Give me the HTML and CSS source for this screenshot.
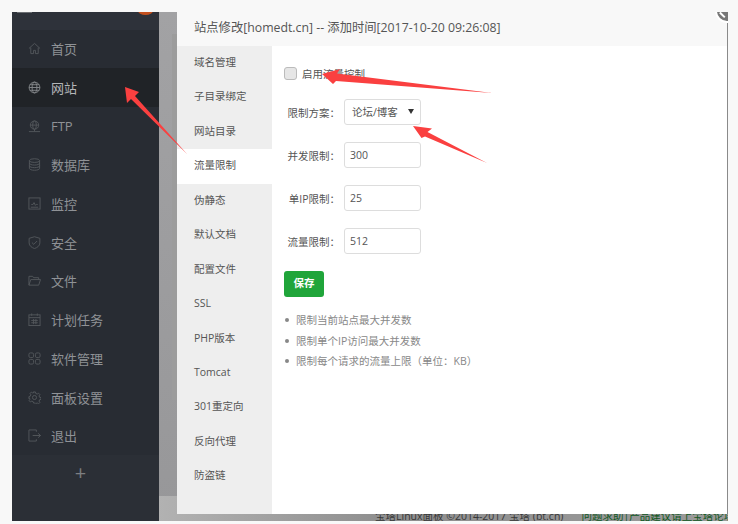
FILE: index.html
```html
<!DOCTYPE html>
<html lang="zh-CN">
<head>
<meta charset="utf-8">
<title>站点修改</title>
<link rel="stylesheet" href="styles.css">
</head>
<body>
<div class="app">
  <aside class="sidebar">
    <div class="logo"><span class="logo-mark"></span><span class="logo-badge"></span></div>
    <nav class="nav">
      <a class="nav-item"><svg class="ico" viewBox="0 0 14 14"><path d="M1 7 7 1.500 13 7M3 6v6.500h3V9h2v3.500h3V6"/></svg>首页</a>
      <a class="nav-item is-active"><svg class="ico" viewBox="0 0 14 14"><circle cx="7" cy="7" r="5.800"/><ellipse cx="7" cy="7" rx="2.600" ry="5.800"/><path d="M1.200 7h11.600M2 4h10M2 10h10"/></svg>网站</a>
      <a class="nav-item"><svg class="ico" viewBox="0 0 14 14"><circle cx="7" cy="5.500" r="4.500"/><ellipse cx="7" cy="5.500" rx="2" ry="4.500"/><path d="M2.500 5.500h9M7 10v2M1 12.500h12"/></svg>FTP</a>
      <a class="nav-item"><svg class="ico" viewBox="0 0 14 14"><ellipse cx="7" cy="2.800" rx="5.500" ry="2"/><path d="M1.500 2.800v8.400c0 1.100 2.500 2 5.500 2s5.500-.9 5.500-2V2.800M1.500 5.600c0 1.100 2.500 2 5.500 2s5.500-.9 5.500-2M1.500 8.400c0 1.100 2.500 2 5.500 2s5.500-.9 5.500-2"/></svg>数据库</a>
      <a class="nav-item"><svg class="ico" viewBox="0 0 14 14"><rect x="1" y="1" width="12" height="12"/><path d="M3.500 8h2l1-2 1.500 3 1-1h1.500M3 11h8"/></svg>监控</a>
      <a class="nav-item"><svg class="ico" viewBox="0 0 14 14"><path d="M7 .8 12.800 2.500v5c0 3-2.800 5-5.800 6-3-1-5.800-3-5.800-6v-5z"/><path d="m4.200 7 2 2 3.600-3.600"/></svg>安全</a>
      <a class="nav-item"><svg class="ico" viewBox="0 0 14 14"><path d="M1 12V2.500h4l1 1.500h5.500v2M1 12l2-6h10.500l-2 6z"/></svg>文件</a>
      <a class="nav-item"><svg class="ico" viewBox="0 0 14 14"><rect x="1" y="2" width="12" height="11.500"/><path d="M1 5h12M4 .5V3M10 .5V3M3.500 8h7M3.500 10.500h7M6 6.500v5.500M8.500 6.500v5.500"/></svg>计划任务</a>
      <a class="nav-item"><svg class="ico" viewBox="0 0 14 14"><rect x="1" y="1" width="5" height="5" rx="1.500"/><rect x="8" y="1" width="5" height="5" rx="1.500"/><rect x="1" y="8" width="5" height="5" rx="1.500"/><rect x="8" y="8" width="5" height="5" rx="1.500"/></svg>软件管理</a>
      <a class="nav-item"><svg class="ico" viewBox="0 0 14 14"><circle cx="7" cy="7" r="2.200"/><path d="M6 1h2l.4 1.700 1.500.6 1.500-.9 1.400 1.400-.9 1.500.6 1.500 1.500.2v2l-1.500.4-.6 1.500.9 1.500-1.400 1.400-1.500-.9-1.500.6L8 13H6l-.4-1.500-1.500-.6-1.500.9-1.400-1.400.9-1.500-.6-1.500L1 8V6l1.500-.4.600-1.500-.9-1.500 1.400-1.400 1.500.9 1.500-.6z"/></svg>面板设置</a>
      <a class="nav-item"><svg class="ico" viewBox="0 0 14 14"><path d="M9 3V1H1v12h8v-2M5 7h8.500M11 4.700 13.500 7 11 9.300"/></svg>退出</a>
    </nav>
    <div class="nav-add">+</div>
  </aside>
  <main class="backdrop">
    <div class="page-panel"></div>
    <footer class="page-foot"><span class="foot-copy">宝塔Linux面板 ©2014-2017 宝塔 (bt.cn)</span><a class="foot-link">问题求助|产品建议请上宝塔论坛</a></footer>
  </main>
  <section class="modal">
    <header class="modal-title">站点修改[homedt.cn] -- 添加时间[2017-10-20 09:26:08]</header>
    <div class="modal-body">
      <ul class="tabs">
        <li class="tab">域名管理</li>
        <li class="tab">子目录绑定</li>
        <li class="tab">网站目录</li>
        <li class="tab is-current">流量限制</li>
        <li class="tab">伪静态</li>
        <li class="tab">默认文档</li>
        <li class="tab">配置文件</li>
        <li class="tab">SSL</li>
        <li class="tab">PHP版本</li>
        <li class="tab">Tomcat</li>
        <li class="tab">301重定向</li>
        <li class="tab">反向代理</li>
        <li class="tab">防盗链</li>
      </ul>
      <form class="form">
        <label class="check-row"><span class="check"></span>启用流量控制</label>
        <div class="field"><span class="field-label">限制方案<span class="punct">：</span></span><div class="select">论坛/博客<span class="caret"></span></div></div>
        <div class="field"><span class="field-label">并发限制<span class="punct">：</span></span><div class="input">300</div></div>
        <div class="field"><span class="field-label">单IP限制<span class="punct">：</span></span><div class="input">25</div></div>
        <div class="field"><span class="field-label">流量限制<span class="punct">：</span></span><div class="input">512</div></div>
        <div class="save">保存</div>
        <ul class="notes">
          <li>限制当前站点最大并发数</li>
          <li>限制单个IP访问最大并发数</li>
          <li>限制每个请求的流量上限<span class="punct">（</span>单位<span class="punct">：</span>KB<span class="punct">）</span></li>
        </ul>
      </form>
    </div>
  </section>
  <div class="modal-close"></div>
</div>
<svg class="arrows" viewBox="0 0 738 524">
  <polygon points="125,87 139,92 135,96 187,154 131,99 127,103"/>
  <polygon points="322,74 340,69 337,73.500 492,93 336,81 333,84"/>
  <polygon points="413,126 432,128.500 427.500,132 487,163 425,136.500 421.500,138"/>
</svg>
</body>
</html>
```
FILE: styles.css
```css
* { box-sizing: border-box; }
html, body { margin: 0; height: 100%; }
body {
  background: #f8f8f8;
  padding: 12px 10px 3px 12px;
  font-family: "Open Sans", "Noto Sans CJK SC", sans-serif;
  font-size: 10.5px;
  color: #555;
  overflow: hidden;
  position: relative;
}
ul { list-style: none; margin: 0; padding: 0; }
.punct { font-family: "Noto Sans CJK TC", sans-serif; }
.app {
  position: relative;
  display: flex;
  width: 716px;
  height: 509px;
  overflow: hidden;
}
.sidebar {
  flex: 0 0 147px;
  background: #282c33;
  display: flex;
  flex-direction: column;
}
.logo { height: 17.5px; background: #2e323a; position: relative; }
.logo-mark {
  position: absolute; left: 5px; top: 0;
  width: 15px; height: 1px; background: #6b6e72;
}
.logo-badge {
  position: absolute; left: 126px; top: -6px;
  width: 15px; height: 9px; border-radius: 50%; background: #c4501e;
}
.nav-item {
  display: flex;
  align-items: center;
  height: 38.7px;
  padding-left: 16px;
  font-size: 13px;
  color: #8f9296;
}
.nav-item.is-active { background: #202327; color: #b4b6b8; }
.ico {
  width: 13px; height: 13px; margin-right: 10px;
  fill: none; stroke: #53575c; stroke-width: 1;
  flex: none;
}
.is-active .ico { stroke: #85888b; }
.nav-add {
  flex: 1;
  background: #2b2f36;
  color: #7d7f82;
  text-align: center;
  font-size: 20px;
  line-height: 35px;
  padding-right: 10px;
}
.backdrop {
  flex: 1;
  background: linear-gradient(180deg, #a2a2a4, #979799);
  display: flex;
  flex-direction: column;
  padding-left: 13px;
}
.page-panel { flex: 1; background: #9c9c9c; margin: 22px 0 96px; }
.page-foot {
  flex: none;
  height: 25px;
  background: linear-gradient(90deg, #b2b2b2, #8e8e8e 40%, #9b9b9b);
  margin-left: -13px;
  padding: 12px 0 0 216px;
  display: flex;
  gap: 18px;
  font-size: 10.5px;
  line-height: 16px;
  white-space: nowrap;
  color: #383838;
  overflow: hidden;
}
.foot-link { color: #10581f; }
.modal {
  position: absolute;
  left: 165px; top: 0;
  width: 551px; height: 502px;
  background: #fff;
  border-right: 1px solid #8a8a8a;
  display: flex;
  flex-direction: column;
}
.modal-title {
  flex: 0 0 34px;
  background: #f8f8f8;
  padding-left: 17px;
  font-size: 12.3px;
  line-height: 32px;
  color: #555;
}
.modal-body { flex: 1; display: flex; min-height: 0; }
.tabs { flex: 0 0 95px; background: #eee; }
.tab { height: 34.45px; line-height: 32px; padding-left: 17px; color: #555; }
.tab.is-current { background: #fff; }
.form { padding: 21px 0 0 12px; color: #555; }
.check-row { display: flex; align-items: center; height: 13px; gap: 5px; margin-bottom: 19px; }
.check {
  width: 13px; height: 13px; border: 1px solid #bbb; border-radius: 3px;
  background: #e6e6e6;
}
.field { display: flex; align-items: center; height: 26px; margin-bottom: 17px; }
.field-label { width: 60px; text-align: right; white-space: nowrap; padding-right: 4px; }
.input, .select {
  width: 77px; height: 26px;
  border: 1px solid #ddd; border-radius: 3px; padding-left: 5px;
  line-height: 24px; color: #555; background: #fff;
}
.select { padding-left: 7px; position: relative; }
.caret {
  position: absolute; right: 6px; top: 9px;
  border: 3px solid transparent; border-top: 5px solid #333; border-bottom: 0;
}
.save {
  width: 40px; height: 26px; margin-top: 1px;
  background: #20a53a; border-radius: 3px;
  color: #fff; text-align: center; line-height: 25px; font-weight: 700;
}
.notes { margin-top: 13px; color: #888; }
.notes li { position: relative; height: 20.5px; line-height: 20px; padding-left: 12px; white-space: nowrap; }
.notes li::before {
  content: ""; position: absolute; left: 1px; top: 8px;
  width: 4px; height: 4px; border-radius: 50%; background: #888;
}
.modal-close {
  position: absolute; right: -11px; top: -13px;
  width: 24px; height: 24px; border-radius: 50%;
  background: #777; border: 2px solid #fff;
}
.modal-close::after {
  content: ""; position: absolute; left: 2px; top: 13px;
  width: 7px; height: 1.5px; background: #fff; transform: rotate(45deg);
}
.arrows {
  position: absolute; left: 0; top: 0; width: 738px; height: 524px;
  pointer-events: none;
}
.arrows polygon { fill: #fa4040; }
```
